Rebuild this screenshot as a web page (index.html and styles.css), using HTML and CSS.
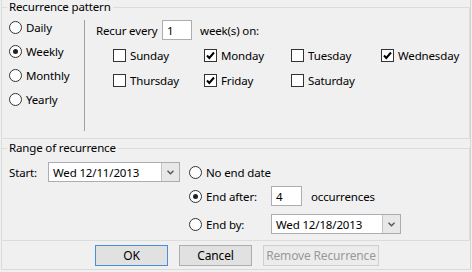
FILE: index.html
```html
<html>
<head>
<meta charset="UTF-8">
<title>Appointment Recurrence</title>
<link rel="stylesheet" href="styles.css">
</head>
<body>
<div class="dialog">
    <fieldset class="group pattern">
        <legend>Recurrence pattern</legend>
        <div class="pattern-body">
            <div class="freq">
                <label class="radio"><span class="circle"></span>Daily</label>
                <label class="radio"><span class="circle on"></span>Weekly</label>
                <label class="radio"><span class="circle"></span>Monthly</label>
                <label class="radio"><span class="circle"></span>Yearly</label>
            </div>
            <div class="divider"></div>
            <div class="weekly">
                <div class="recur-row">
                    <span class="recur-label">Recur every</span>
                    <span class="field num">1</span>
                    <span class="after">week(s) on:</span>
                </div>
                <div class="days">
                    <label class="check"><span class="box"></span>Sunday</label>
                    <label class="check"><span class="box"><svg width="11" height="11" viewBox="0 0 11 11"><path d="M2 5.5 L4.3 8 L9 2.5" fill="none" stroke="#000" stroke-width="2"/></svg></span>Monday</label>
                    <label class="check"><span class="box"></span>Tuesday</label>
                    <label class="check"><span class="box"><svg width="11" height="11" viewBox="0 0 11 11"><path d="M2 5.5 L4.3 8 L9 2.5" fill="none" stroke="#000" stroke-width="2"/></svg></span>Wednesday</label>
                    <label class="check"><span class="box"></span>Thursday</label>
                    <label class="check"><span class="box"><svg width="11" height="11" viewBox="0 0 11 11"><path d="M2 5.5 L4.3 8 L9 2.5" fill="none" stroke="#000" stroke-width="2"/></svg></span>Friday</label>
                    <label class="check"><span class="box"></span>Saturday</label>
                </div>
            </div>
        </div>
    </fieldset>

    <fieldset class="group range">
        <legend>Range of recurrence</legend>
        <div class="range-body">
            <div class="start">
                <span class="start-label">Start:</span>
                <span class="combo"><span class="combo-text">Wed 12/11/2013</span><span class="arrow"><svg width="7" height="5" viewBox="0 0 7 5"><path d="M0.5 0.8 L3.5 3.8 L6.5 0.8" fill="none" stroke="#555" stroke-width="1.4"/></svg></span></span>
            </div>
            <div class="ends">
                <div class="end-row first">
                    <label class="radio"><span class="circle"></span>No end date</label>
                </div>
                <div class="end-row second">
                    <label class="radio end-label"><span class="circle on"></span>End after:</label>
                    <span class="field count">4</span>
                    <span class="after">occurrences</span>
                </div>
                <div class="end-row third">
                    <label class="radio end-label"><span class="circle"></span>End by:</label>
                    <span class="combo"><span class="combo-text">Wed 12/18/2013</span><span class="arrow"><svg width="7" height="5" viewBox="0 0 7 5"><path d="M0.5 0.8 L3.5 3.8 L6.5 0.8" fill="none" stroke="#555" stroke-width="1.4"/></svg></span></span>
                </div>
            </div>
        </div>
    </fieldset>

    <div class="buttons">
        <button class="btn default">OK</button>
        <button class="btn">Cancel</button>
        <button class="btn disabled">Remove Recurrence</button>
    </div>
</div>
</body>
</html>
```

FILE: styles.css
```css
body {
    margin: 0;
    background-color: #f0f0f0;
    font-family: "Noto Sans", sans-serif;
    font-size: 11.5px;
    letter-spacing: -0.15px;
    color: #000;
}
.dialog {
    width: 470px;
    height: 270px;
    margin-left: 1px;
    border-right: 1px solid #d4d4d4;
    border-bottom: 1px solid #dadada;
    border-left: 1px solid #dcdcdc;
    box-sizing: border-box;
}
.group {
    margin: 0;
    padding: 0;
    width: 469px;
    margin-left: -1px;
    box-sizing: border-box;
    border: 1px solid #dcdcdc;
    min-width: 0;
}
.group legend {
    margin-left: 5px;
    padding: 0 2px;
    line-height: 14px;
}
.pattern {
    height: 139px;
}
.range {
    margin-top: 2px;
    height: 100px;
}

/* radios and checkboxes */
.radio, .check {
    display: flex;
    align-items: center;
}
.circle {
    width: 13px;
    height: 13px;
    border: 1px solid #333;
    border-radius: 50%;
    background: #fff;
    box-sizing: border-box;
    margin-right: 4px;
    display: flex;
    align-items: center;
    justify-content: center;
    flex: none;
}
.circle.on::after {
    content: "";
    width: 5px;
    height: 5px;
    border-radius: 50%;
    background: #222;
}
.box {
    width: 13px;
    height: 13px;
    border: 1px solid #333;
    background: #fff;
    box-sizing: border-box;
    margin-right: 4px;
    display: flex;
    align-items: center;
    justify-content: center;
    flex: none;
}

/* recurrence pattern */
.pattern-body {
    display: flex;
}
.freq {
    width: 75px;
    padding-left: 7px;
    margin-top: 1px;
}
.freq .radio {
    height: 24px;
}
.divider {
    width: 1px;
    height: 111px;
    margin-top: 6px;
    background: #a0a0a0;
}
.weekly {
    padding-left: 11px;
    padding-top: 6px;
}
.recur-row {
    display: flex;
    align-items: center;
    height: 20px;
}
.recur-label {
    width: 66px;
}
.field {
    height: 20px;
    border: 1px solid #abadb3;
    background: #fff;
    box-sizing: border-box;
    padding-left: 4px;
    display: flex;
    align-items: center;
}
.num {
    width: 30px;
    margin-right: 8px;
}
.days {
    display: grid;
    grid-template-columns: 91px 87px 90px auto;
    grid-auto-rows: 25px;
    margin-top: 3px;
    margin-left: 17px;
}

/* range of recurrence */
.range-body {
    display: flex;
    padding-top: 7px;
}
.start {
    display: flex;
    align-items: center;
    height: 20px;
    padding-left: 7px;
    width: 180px;
}
.start-label {
    width: 39px;
}
.combo {
    display: flex;
    height: 20px;
    width: 132px;
    border: 1px solid #abadb3;
    box-sizing: border-box;
    background: #fff;
}
.combo-text {
    flex: 1;
    padding-left: 4px;
    display: flex;
    align-items: center;
}
.arrow {
    width: 17px;
    background: #e8e8e8;
    border-left: 1px solid #c4c4c4;
    display: flex;
    align-items: center;
    justify-content: center;
}
.end-row {
    display: flex;
    align-items: center;
    height: 20px;
}
.end-row.second {
    margin-top: 4px;
}
.end-row.third {
    margin-top: 8px;
}
.end-label {
    width: 82px;
}
.count {
    width: 31px;
    margin-right: 9px;
}
.third .combo {
    width: 130px;
}

/* buttons */
.buttons {
    display: flex;
    justify-content: center;
    gap: 11px;
    padding-top: 4px;
    margin-left: 2px;
}
.btn {
    height: 21px;
    width: 73px;
    font-family: inherit;
    font-size: 12px;
    letter-spacing: -0.15px;
    background: #e1e1e1;
    border: 1px solid #adadad;
    padding: 0;
    color: #000;
}
.btn.default {
    border-color: #4a8ed8;
}
.btn.disabled {
    width: 116px;
    background: #ececec;
    border-color: #cfcfcf;
    color: #999;
}
```
